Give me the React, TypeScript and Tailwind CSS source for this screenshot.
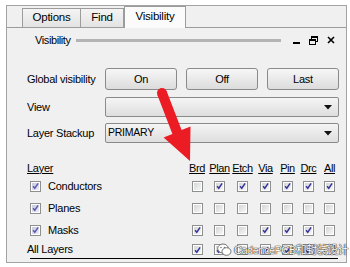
import { Fragment } from 'react'

const cols = ['Brd', 'Plan', 'Etch', 'Via', 'Pin', 'Drc', 'All']

const layers = [
  { name: 'Conductors', on: true, h: 'h-[22px]', marks: [false, true, true, true, true, true, true] },
  { name: 'Planes', on: true, h: 'h-[22px]', marks: [false, false, false, false, false, false, false] },
  { name: 'Masks', on: true, h: 'h-[22px]', marks: [true, false, false, true, true, true, false] },
  { name: 'All Layers', on: null, h: 'h-[17px]', marks: [true, true, false, true, true, true, false] },
]

const Check = ({ on, soft }: { on: boolean; soft?: boolean }) => (
  <div className="w-[11px] h-[11px] border border-[#8e8f8f] bg-white p-px">
    <div
      className={`w-full h-full flex items-center justify-center ${
        soft ? 'bg-gradient-to-br from-[#c9c9de] to-[#ececf4]' : 'bg-gradient-to-br from-[#d6d6d6] to-[#f7f7f7]'
      }`}
    >
      {on && (
        <svg width="8" height="8" viewBox="0 0 8 8">
          <path d="M1.2 4.2 L3.2 6.6 L7 1" fill="none" stroke={soft ? '#5a5ab0' : '#34349a'} strokeWidth="1.7" />
        </svg>
      )}
    </div>
  </div>
)

const Caret = () => (
  <svg width="8" height="5" viewBox="0 0 8 5">
    <path d="M0 0 H8 L4 4.5 Z" fill="#111" />
  </svg>
)

export default function App() {
  return (
    <div className="relative w-[350px] h-[267px] bg-white overflow-hidden text-[11px] tracking-[-0.25px] text-black font-['Liberation_Sans','DejaVu_Sans',sans-serif]">
      {/* 外框 */}
      <div className="ml-[6px] mt-[5px] w-[341px] h-[258px] border border-[#a3a3a3] bg-[#f0f0f0]">
        {/* tabs */}
        <div className="flex items-end h-[22px] pl-[15px] border-b border-[#9c9c9c]">
          <div className="w-[59px] h-[19px] border border-b-0 border-[#9c9c9c] bg-gradient-to-b from-[#f4f4f4] to-[#e3e3e3] flex items-center justify-center text-[11.5px]">
            Options
          </div>
          <div className="w-[43px] h-[19px] border border-b-0 border-l-0 border-[#9c9c9c] bg-gradient-to-b from-[#f4f4f4] to-[#e3e3e3] flex items-center justify-center text-[11.5px]">
            Find
          </div>
          <div className="relative -mb-px w-[62px] h-[22px] border border-b-0 border-[#9c9c9c] bg-[#fbfbfb] flex items-center justify-center text-[11.5px] pb-[2px]">
            Visibility
          </div>
        </div>

        {/* header */}
        <div className="flex items-center h-[14px] mt-[5px] pl-[28px]">
          <span className="w-[41px] tracking-[-0.4px]">Visibility</span>
          <div className="w-[205px] h-[3px] bg-[#b4b4b4]" />
          <div className="flex items-center ml-[12px] gap-[9px]">
            <div className="w-[7px] h-[2px] bg-black mt-[6px]" />
            <svg width="9" height="9" viewBox="0 0 9 9">
              <rect x="2.5" y="0.5" width="6" height="5" fill="none" stroke="#000" />
              <rect x="2" y="0" width="7" height="2" fill="#000" />
              <rect x="0.5" y="3.5" width="6" height="5" fill="#f0f0f0" stroke="#000" />
              <rect x="0" y="3" width="7" height="2" fill="#000" />
            </svg>
            <svg width="8" height="8" viewBox="0 0 8 8">
              <path d="M1 1 L7 7 M7 1 L1 7" stroke="#000" strokeWidth="1.6" />
            </svg>
          </div>
        </div>

        {/* global visibility */}
        <div className="flex items-center mt-[21px] pl-[20px]">
          <span className="w-[78px]">Global visibility</span>
          <div className="grid grid-cols-3 gap-[9px] w-[234px]">
            {['On', 'Off', 'Last'].map((b) => (
              <div
                key={b}
                className="h-[22px] rounded-[3px] border border-[#8a8a8a] bg-gradient-to-b from-[#f7f7f7] to-[#dcdcdc] flex items-center justify-center"
              >
                {b}
              </div>
            ))}
          </div>
        </div>

        <div className="flex items-center mt-[7px] pl-[20px]">
          <span className="w-[78px]">View</span>
          <div className="w-[234px] h-[20px] rounded-[2px] border border-[#8a8a8a] bg-gradient-to-b from-[#f5f5f5] to-[#dedede] flex items-center justify-end pr-[6px]">
            <Caret />
          </div>
        </div>

        <div className="flex items-center mt-[6px] pl-[20px]">
          <span className="w-[78px]">Layer Stackup</span>
          <div className="w-[234px] h-[20px] rounded-[2px] border border-[#8a8a8a] bg-gradient-to-b from-[#f5f5f5] to-[#dedede] flex items-center justify-between pl-[2px] pr-[6px] text-[10.5px]">
            <span>PRIMARY</span>
            <Caret />
          </div>
        </div>

        {/* layer table */}
        <div className="grid grid-cols-[159px_22px_23px_23px_23px_21px_21px_21px] mt-[18px] ml-[20px]">
          <div className="h-[14px] flex items-center">
            <span className="underline">Layer</span>
          </div>
          {cols.map((c) => (
            <div key={c} className="h-[14px] flex items-center justify-center">
              <span className="underline tracking-[-0.4px]">{c}</span>
            </div>
          ))}
          {layers.map((l) => (
            <Fragment key={l.name}>
              <div className={`${l.h} flex items-center gap-[7px] ${l.on === null ? '' : 'pl-[3px]'}`}>
                {l.on !== null && <Check on={l.on} soft />}
                <span>{l.name}</span>
              </div>
              {l.marks.map((m, i) => (
                <div key={i} className={`${l.h} flex items-center justify-center`}>
                  <Check on={m} />
                </div>
              ))}
            </Fragment>
          ))}
        </div>
        <div className="ml-[23px] w-[308px] h-px bg-black" />
      </div>

      {/* red arrow */}
      <svg className="absolute left-0 top-0" width="350" height="267" viewBox="0 0 350 267">
        <polygon
          points="157.4,94.9 166.6,91.1 181.6,130.1 190.5,126.4 190,161 163.6,137.6 172.4,133.9"
          fill="#ec1c24"
        />
        <circle cx="162" cy="93" r="5" fill="#ec1c24" />
      </svg>

      {/* watermark */}
      <div className="absolute left-[217px] top-[243px] h-[14px] flex items-center gap-[2px] whitespace-nowrap text-white [text-shadow:0_0_1px_#222,0_0_1px_#333,0_0_1px_#444]">
        <svg className="shrink-0" width="15" height="14" viewBox="0 0 15 14">
          <ellipse cx="6" cy="5.5" rx="5.3" ry="4.5" fill="#fff" stroke="#666" strokeWidth="0.9" />
          <ellipse cx="9.5" cy="8.5" rx="4.5" ry="3.8" fill="#fff" stroke="#666" strokeWidth="0.9" />
          <circle cx="4" cy="4.5" r="0.8" fill="#777" />
          <circle cx="7.5" cy="4.5" r="0.8" fill="#777" />
        </svg>
        <span className="text-[11px] leading-[14px] tracking-[-0.5px] whitespace-nowrap font-['Liberation_Sans','Noto_Sans_CJK_SC',sans-serif]">
          CadencePCB和封装设计
        </span>
      </div>
    </div>
  )
}
